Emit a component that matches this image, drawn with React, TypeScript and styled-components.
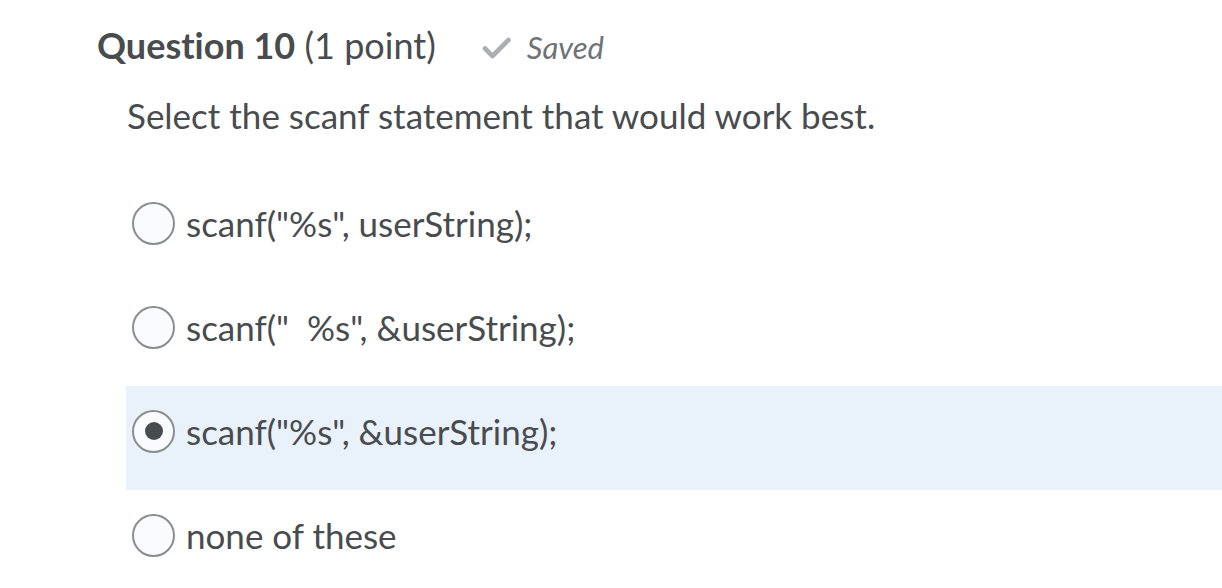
import React from 'react';
import styled, { createGlobalStyle } from 'styled-components';

const GlobalStyle = createGlobalStyle`
  html, body {
    margin: 0;
    padding: 0;
    background: #ffffff;
  }

  body {
    font-family: Lato, "Noto Sans", sans-serif;
    color: #494c4e;
    font-variant-ligatures: none;
  }
`;

const options = [
  { id: 'a', label: 'scanf("%s", userString);' },
  { id: 'b', label: 'scanf("  %s", &userString);' },
  { id: 'c', label: 'scanf("%s", &userString);' },
  { id: 'd', label: 'none of these' }
];

const Page = styled.div`
  padding: 23px 0 0 97px;
`;

const Header = styled.div`
  display: flex;
  align-items: baseline;
  gap: 46px;
`;

const Title = styled.h2`
  margin: 0;
  font-size: 36px;
  line-height: 44px;
  font-weight: 400;
  color: #494c4e;
`;

const TitleStrong = styled.span`
  font-weight: 700;
`;

const SavedBadge = styled.div`
  display: flex;
  align-items: baseline;
  gap: 16px;
  font-size: 31px;
  font-style: italic;
  color: #6e7376;

  svg {
    align-self: center;
    margin-top: 1px;
  }
`;

const Prompt = styled.p`
  margin: 26px 0 0 30px;
  font-size: 35px;
  line-height: 44px;
`;

const OptionList = styled.div`
  margin: 41px 0 0 29px;
  display: flex;
  flex-direction: column;
`;

const OptionRow = styled.label<{ $selected: boolean }>`
  display: flex;
  align-items: center;
  gap: 11px;
  height: 104px;
  box-sizing: border-box;
  padding: 0 0 14px 6px;
  background: ${p => (p.$selected ? '#e9f1fb' : 'transparent')};
  cursor: pointer;
`;

const Radio = styled.span<{ $checked: boolean }>`
  display: flex;
  align-items: center;
  justify-content: center;
  width: 43px;
  height: 43px;
  box-sizing: border-box;
  border-radius: 50%;
  border: 2px solid #898e91;
  background: #f9fbff;
  flex-shrink: 0;

  &::after {
    content: '';
    display: ${p => (p.$checked ? 'block' : 'none')};
    width: 18px;
    height: 18px;
    border-radius: 50%;
    background: #494c4e;
  }
`;

const OptionText = styled.span`
  font-size: 35px;
  line-height: 43px;
  white-space: pre;
`;

const CheckIcon = () => (
  <svg width="29" height="22" viewBox="0 0 29 22">
    <path d="M3 11.5 L10.5 19 L26.5 3" fill="none" stroke="#a9afb2" strokeWidth="4.6" strokeLinecap="round" strokeLinejoin="round" />
  </svg>
);

const App = () => {

  const selected = 'c';

  return (
    <Page>
      <GlobalStyle />

      <Header>
        <Title>
          <TitleStrong>Question 10</TitleStrong> (1 point)
        </Title>

        <SavedBadge>
          <CheckIcon />
          Saved
        </SavedBadge>
      </Header>

      <Prompt>Select the scanf statement that would work best.</Prompt>

      <OptionList>
        {options.map(option => {

          return (
            <OptionRow key={option.id} $selected={option.id === selected}>
              <Radio $checked={option.id === selected} />
              <OptionText>{option.label}</OptionText>
            </OptionRow>
          );
        })}
      </OptionList>
    </Page>
  );
};

export default App;
